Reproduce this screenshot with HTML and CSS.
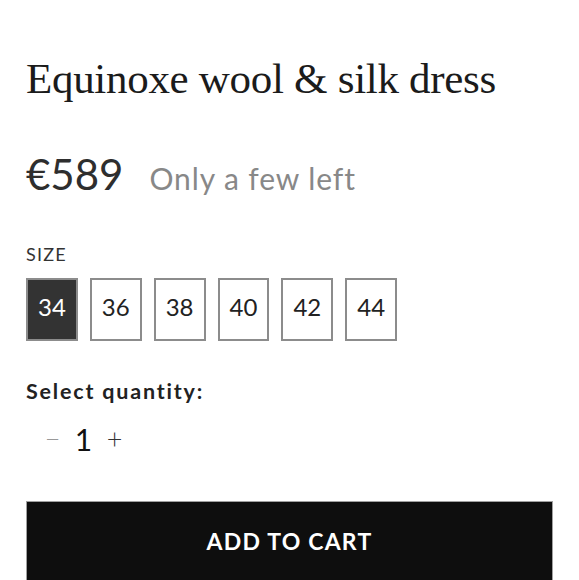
FILE: index.html
```html
<!DOCTYPE html>
<html lang="en">
<head>
<meta charset="utf-8">
<title>Equinoxe wool &amp; silk dress</title>
<link rel="stylesheet" href="styles.css">
</head>
<body>
<main class="product">
  <h1 class="title">Equinoxe wool &amp; silk dress</h1>
  <div class="price-row">
    <span class="price">€589</span>
    <span class="stock">Only a few left</span>
  </div>
  <div class="size-label">SIZE</div>
  <div class="sizes">
    <button class="size selected">34</button>
    <button class="size">36</button>
    <button class="size">38</button>
    <button class="size">40</button>
    <button class="size">42</button>
    <button class="size">44</button>
  </div>
  <div class="qty-label">Select quantity:</div>
  <div class="qty">
    <button class="qty-btn minus">−</button>
    <span class="qty-value">1</span>
    <button class="qty-btn plus">+</button>
  </div>
  <button class="add-to-cart">ADD TO CART</button>
</main>
</body>
</html>
```
FILE: styles.css
```css
html, body {
  margin: 0;
  padding: 0;
  background: #ffffff;
}

.product {
  padding: 53px 26px 0 26px;
  font-family: Lato, "Open Sans", sans-serif;
  color: #222;
}

.title {
  margin: 0;
  font-family: "Liberation Serif", serif;
  font-weight: normal;
  font-size: 43px;
  line-height: 52px;
  letter-spacing: -0.3px;
  color: #1b1b1b;
}

.price-row {
  margin-top: 45px;
  display: flex;
  align-items: baseline;
  gap: 26px;
  height: 48px;
}

.price {
  font-size: 42px;
  line-height: 48px;
  color: #2e2e2e;
}

.stock {
  font-size: 30px;
  line-height: 38px;
  letter-spacing: 0.9px;
  color: #888;
}

.size-label {
  margin-top: 45px;
  font-size: 18px;
  line-height: 22px;
  letter-spacing: 1.2px;
  color: #333;
}

.sizes {
  margin-top: 13px;
  display: flex;
  gap: 12px;
}

.size {
  box-sizing: border-box;
  height: 63px;
  padding: 12px 10px 18px 10px;
  border: 2px solid #8c8c8c;
  background: #fff;
  color: #222;
  font-family: Lato, "Open Sans", sans-serif;
  font-size: 24px;
  line-height: 29px;
}

.size.selected {
  background: #333;
  color: #fff;
}

.qty-label {
  margin-top: 38px;
  font-size: 21.5px;
  line-height: 24px;
  font-weight: bold;
  letter-spacing: 1.8px;
  color: #222;
}

.qty {
  margin-top: 16px;
  padding-left: 11px;
  display: flex;
  align-items: center;
  height: 40px;
}

.qty-btn,
.qty-value {
  width: 31px;
  text-align: center;
  font-family: Lato, "Open Sans", sans-serif;
  line-height: 40px;
}

.qty-btn {
  padding: 0;
  border: 0;
  background: none;
  font-size: 27px;
  font-weight: 300;
}

.minus {
  color: #999;
}

.plus {
  color: #333;
}

.qty-value {
  font-size: 30px;
  color: #111;
}

.add-to-cart {
  display: block;
  box-sizing: border-box;
  width: 100%;
  height: 92px;
  margin-top: 42px;
  padding-bottom: 14px;
  border: 1px solid #a0a0a0;
  background: #0e0e0e;
  color: #fff;
  font-family: Lato, "Open Sans", sans-serif;
  font-size: 23px;
  font-weight: bold;
  letter-spacing: 1.2px;
}
```
